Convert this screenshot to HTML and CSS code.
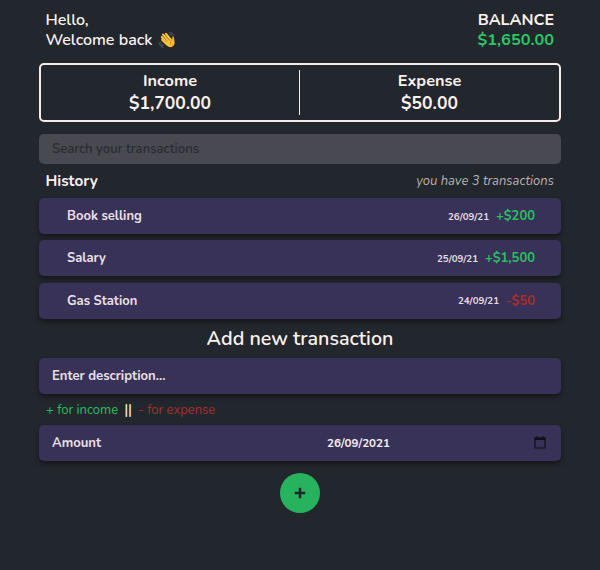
FILE: index.html
```html
<!DOCTYPE html>
<html lang="en">
<head>
<meta charset="utf-8">
<title>Expense tracker</title>
<link rel="stylesheet" href="styles.css">
</head>
<body>
<main class="tracker">
  <header class="header">
    <div class="greeting">
      <div class="hello">Hello,</div>
      <div class="welcome"><span>Welcome back</span>
        <svg class="wave" viewBox="0 0 18 18" aria-hidden="true">
          <path d="M1 11.5Q1.500 15 5 16.500M2.500 10.800Q3 13.500 5.500 14.700M11.500 1.200Q14.500 1.500 16 4M11.500 3Q13.500 3.500 14.500 5" fill="none" stroke="#4b4d53" stroke-width="1.100" stroke-linecap="round"/>
          <path d="M4.200 9L10 15.500Q13.500 17.500 16 14Q17.200 12 16.400 9.500L15.800 5.700Q14.300 4.800 14.200 6.700V8.800L10.500 10Z" fill="#f6b62d"/>
          <path d="M5.500 9.500L10.500 14M3.800 6L9.500 12M5.100 3.600L11.500 11M8 2.800L13.300 9.500M4.200 8.700L9 13.500" fill="none" stroke="#fcc843" stroke-width="2.100" stroke-linecap="round"/>
          <path d="M5.300 5.800L10.200 11M7 4L11.800 9.500M5 8.200L8.500 11.600M13.900 8.900Q11.500 10 12.500 12.500" fill="none" stroke="#c87c20" stroke-width=".6" stroke-linecap="round"/>
        </svg>
      </div>
    </div>
    <div class="balance">
      <div class="balance-title">BALANCE</div>
      <div class="balance-value">$1,650.00</div>
    </div>
  </header>

  <section class="totals">
    <div class="total total-income"><div class="total-name">Income</div><div class="total-value">$1,700.00</div></div>
    <div class="total total-expense"><div class="total-name">Expense</div><div class="total-value">$50.00</div></div>
  </section>

  <div class="search">Search your transactions</div>

  <div class="history-head">
    <h2 class="history-title">History</h2>
    <span class="history-count">you have 3 transactions</span>
  </div>

  <ul class="history">
    <li class="bar item"><span class="item-name">Book selling</span><span class="item-date">26/09/21</span><span class="item-amount plus">+$200</span></li>
    <li class="bar item"><span class="item-name">Salary</span><span class="item-date">25/09/21</span><span class="item-amount plus">+$1,500</span></li>
    <li class="bar item"><span class="item-name">Gas Station</span><span class="item-date">24/09/21</span><span class="item-amount minus">-$50</span></li>
  </ul>

  <section class="form">
    <h2 class="form-title">Add new transaction</h2>
    <div class="bar field"><span class="description">Enter description...</span></div>
    <div class="hint"><span class="hint-income">+ for income</span><span class="hint-divider">||</span><span class="hint-expense">- for expense</span></div>
    <div class="bar field amount-row">
      <span class="amount">Amount</span>
      <span class="date">26/09/2021</span>
      <svg class="calendar" viewBox="0 0 12 13" aria-hidden="true"><path d="M1 2H11V12H1Z" fill="none" stroke="#121016" stroke-width="1.200"/><path d="M.5 1.500H11.500V4H.5ZM2.300 0H3.500V2H2.300ZM8.500 0H9.700V2H8.500Z" fill="#121016"/></svg>
    </div>
    <button class="add" aria-label="Add transaction"><svg class="add-icon" viewBox="0 0 12 12" aria-hidden="true"><path d="M6 .8V11.200M.8 6H11.200" stroke="#21252c" stroke-width="2.500"/></svg></button>
  </section>
</main>
</body>
</html>
```
FILE: styles.css
```css
* { box-sizing: border-box; }
body {
  margin: 0;
  min-height: 570px;
  background: #22262d;
  color: #fbf1ee;
  font-family: Nunito, Lato, "Open Sans", sans-serif;
  white-space: nowrap;
}
h2, ul { margin: 0; padding: 0; }
.tracker { width: 522px; margin: 0 auto; padding-top: 10px; }
.header { display: flex; justify-content: space-between; height: 52.500px; padding: 0 7px 0 6.500px; line-height: 20px; font-size: 16px; }
.hello, .welcome { font-weight: 600; }
.welcome { display: flex; align-items: center; gap: 6px; }
.wave { width: 18px; height: 18px; }
.balance { text-align: right; font-weight: 700; }
.balance-title { font-size: 16.100px; }
.balance-value { color: #2bc765; font-size: 16.300px; }
.totals { display: flex; align-items: center; height: 59px; border: 2px solid #f7ebe7; border-radius: 5px; }
.total { height: 45px; text-align: center; font-weight: 700; font-size: 16.300px; line-height: 22px; }
.total-income { width: 259px; border-right: 1px solid #f7ebe7; }
.total-expense { width: 259px; }
.total-value { font-size: 17.500px; }
.search { height: 30px; margin-top: 12.500px; padding-left: 13px; border-radius: 5px; background: #494a51; color: #292a31; font-size: 13.100px; font-weight: 600; line-height: 30px; }
.history-head { display: flex; justify-content: space-between; align-items: center; height: 34px; padding: 0 7px 0 6.500px; }
.history-title { font-size: 15.300px; font-weight: 700; }
.history-count { color: #b7b0b2; font-size: 13px; font-style: italic; }
.history { display: grid; gap: 6.300px; list-style: none; }
.bar { display: flex; align-items: center; height: 36px; border-radius: 5px; background: #383158; box-shadow: 0 3px 4px #17171b; }
.item { padding: 0 26px 0 28px; }
.item-name { margin-right: auto; color: #e9e0e5; font-size: 13px; font-weight: 700; }
.item-date { margin-right: 7px; color: #e4dbe2; font-size: 9.700px; font-weight: 700; }
.item-amount { font-size: 13px; font-weight: 700; }
.plus, .hint-income { color: #2bbd65; }
.minus, .hint-expense { color: #a72f2d; }
.form-title { height: 39.700px; font-size: 19.700px; font-weight: 600; line-height: 39px; text-align: center; }
.field { padding: 0 13px; color: #e9e0e5; font-size: 13.100px; font-weight: 700; }
.hint { display: flex; align-items: center; gap: 6.500px; height: 30.500px; padding-left: 7px; font-size: 13px; }
.hint-divider { font-weight: 600; }
.date { margin-left: auto; margin-right: 144px; color: #f6eef0; font-size: 11.600px; }
.calendar { width: 12px; height: 13px; margin-right: 2px; }
.add { display: flex; align-items: center; justify-content: center; width: 40px; height: 40px; margin: 12px auto 0; padding: 0; border: 0; border-radius: 50%; background: #27b35d; }
.add-icon { width: 12px; height: 12px; }
```
